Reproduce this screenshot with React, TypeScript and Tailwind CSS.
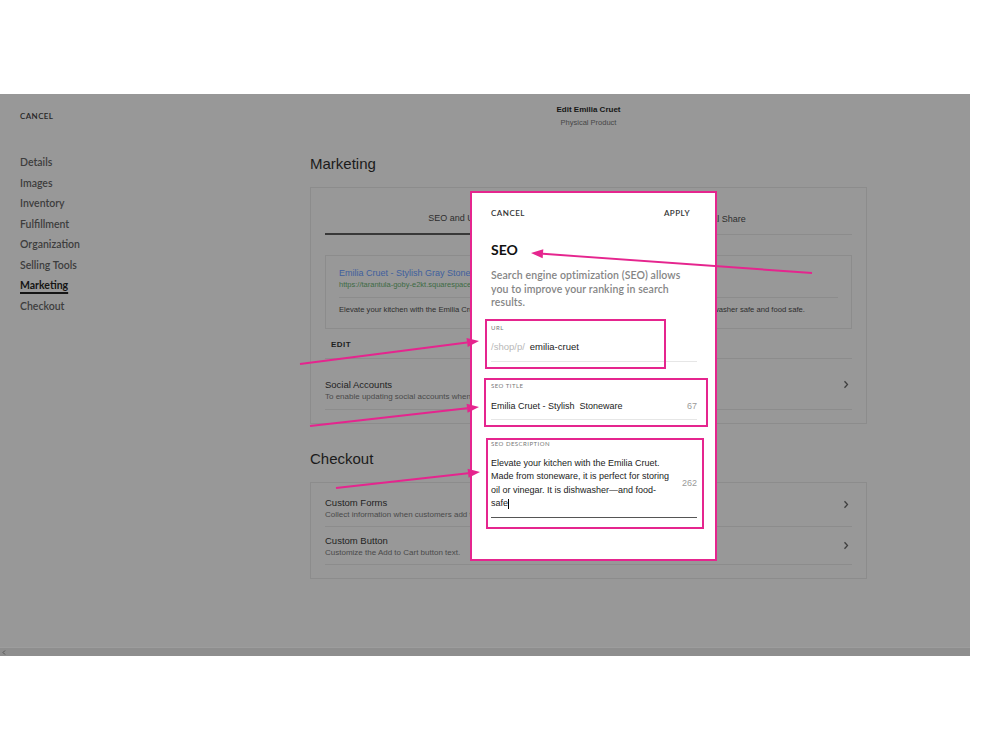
import React from 'react';

const PINK = '#e5258e';

const navItems = ['Details', 'Images', 'Inventory', 'Fulfillment', 'Organization', 'Selling Tools', 'Marketing', 'Checkout'];

function Chevron() {
    return (
        <svg width="6" height="9" viewBox="0 0 6 9" className="shrink-0">
            <path d="M1.5 1.2 4.5 4.5 1.5 7.8" stroke="#3f3f3f" strokeWidth="1.3" fill="none" />
        </svg>
    );
}

// pink annotation arrow, tip at x2/y2
function Arrow({ x1, y1, x2, y2 }: { x1: number; y1: number; x2: number; y2: number }) {
    const dx = x2 - x1;
    const dy = y2 - y1;
    const len = Math.hypot(dx, dy);
    const ux = dx / len;
    const uy = dy / len;
    const hl = 12;
    const hw = 4.5;
    const bx = x2 - ux * hl;
    const by = y2 - uy * hl;
    const pts = `${x2},${y2} ${bx - uy * hw},${by + ux * hw} ${bx + uy * hw},${by - ux * hw}`;
    return (
        <g>
            <line x1={x1} y1={y1} x2={bx} y2={by} stroke={PINK} strokeWidth="2" />
            <polygon points={pts} fill={PINK} />
        </g>
    );
}

function RowItem({ title, sub, last }: { title: string; sub: string; last?: boolean }) {
    return (
        <div className="flex items-center justify-between pr-[3px] border-b border-[#8c8c8c]">
            <div className={last ? 'pt-[7px] pb-[6px]' : 'pt-[13px] pb-[6px]'}>
                <div className="text-[9.5px] leading-[14px] text-[#1f1f1f]">{title}</div>
                <div className="text-[8px] leading-[10px] text-[#4a4a4a] whitespace-nowrap">{sub}</div>
            </div>
            <Chevron />
        </div>
    );
}

export default function App() {
    return (
        <div className="relative w-[1000px] h-[750px] bg-white overflow-hidden pt-[94px] font-['Liberation_Sans',Arial,sans-serif]">
            {/* dimmed editor screenshot */}
            <div className="relative w-[970px] h-[562px] bg-[#989898] flex flex-col">
                <div className="flex flex-1">
                    {/* sidebar */}
                    <div className="w-[310px] pl-5 pt-[17px] font-['Lato',sans-serif]">
                        <div className="text-[8px] leading-[10px] font-semibold tracking-[0.05em] text-[#262626]">CANCEL</div>
                        <div className="mt-[32px] flex flex-col">
                            {navItems.map((n) => (
                                <div key={n} className="h-[20.5px] flex items-center">
                                    <span
                                        className={
                                            n === 'Marketing'
                                                ? 'text-[10.5px] font-bold text-[#141414] underline underline-offset-[3px] decoration-[1.5px]'
                                                : 'text-[10.5px] font-semibold text-[#3d3d3d]'
                                        }
                                    >
                                        {n}
                                    </span>
                                </div>
                            ))}
                        </div>
                    </div>

                    {/* main column */}
                    <div className="w-[557px] pt-[11px]">
                        <div className="text-center">
                            <div className="text-[8px] leading-[10px] font-bold text-[#161616]">Edit Emilia Cruet</div>
                            <div className="mt-[3px] text-[7.5px] leading-[10px] text-[#474747]">Physical Product</div>
                        </div>

                        <div className="mt-[26px] text-[15px] leading-[20px] text-[#1b1b1b]">Marketing</div>

                        <div className="mt-[13px] border border-[#8c8c8c] px-[14px] pt-[14px] pb-[13px]">
                            <div className="grid grid-cols-2 h-[33px] border-b border-[#8c8c8c] text-[9px] text-[#2e2e2e]">
                                <div className="flex items-center justify-center pt-[3px] border-b-2 border-[#383838] -mb-px">SEO and URL</div>
                                <div className="flex items-center justify-center pt-[3px]">Social Share</div>
                            </div>

                            <div className="mt-[20px] h-[74px] border border-[#8c8c8c] px-[13px] pt-[11px]">
                                <div className="text-[9px] leading-[12px] text-[#40609e] whitespace-nowrap">Emilia Cruet - Stylish Gray Stoneware</div>
                                <div className="mt-px text-[7.5px] leading-[10px] text-[#3d6b44] whitespace-nowrap">https://tarantula-goby-e2kt.squarespace.com/shop/p/emilia-cruet</div>
                                <div className="mt-[7px] border-t border-[#8c8c8c]" />
                                <div className="mt-[7px] text-[7.65px] leading-[10px] text-[#2e2e2e] whitespace-nowrap">
                                    Elevate your kitchen with the Emilia Cruet. Made from stoneware, it is perfect for storing oil or vinegar. It is dishwasher safe and food safe.
                                </div>
                            </div>

                            <div className="pt-[11px] pb-[8px] pl-[6px] border-b border-[#8c8c8c] text-[8px] leading-[10px] font-bold tracking-[0.06em] text-[#1e1e1e]">EDIT</div>

                            <div className="flex items-center justify-between pr-[3px] border-b border-[#8c8c8c]">
                                <div className="pt-[19px] pb-[7px]">
                                    <div className="text-[9.5px] leading-[14px] text-[#1f1f1f]">Social Accounts</div>
                                    <div className="text-[8px] leading-[10px] text-[#4a4a4a] whitespace-nowrap">
                                        To enable updating social accounts when you publish, connect your accounts.
                                    </div>
                                </div>
                                <Chevron />
                            </div>
                        </div>

                        <div className="mt-[25px] text-[15px] leading-[20px] text-[#1b1b1b]">Checkout</div>

                        <div className="mt-[13px] border border-[#8c8c8c] px-[14px] pb-[13px]">
                            <RowItem title="Custom Forms" sub="Collect information when customers add this product to their cart." />
                            <RowItem title="Custom Button" sub="Customize the Add to Cart button text." last />
                        </div>
                    </div>
                </div>

                {/* horizontal scrollbar */}
                <div className="h-[9px] bg-[#8e8e8e] border-t border-[#9d9d9d] flex items-center pl-[2px]">
                    <svg width="4" height="5" viewBox="0 0 4 5">
                        <path d="M3 0.5 1 2.5 3 4.5" stroke="#555" strokeWidth="1" fill="none" />
                    </svg>
                </div>

                {/* SEO modal */}
                <div className="absolute left-[470px] top-[97px] w-[247px] h-[370px] bg-white border-2 border-[#e5258e] pl-[19px] pr-[18px] pt-[15px]">
                    <div className="flex justify-between pr-[7px] font-['Lato',sans-serif] text-[8px] leading-[10px] tracking-[0.06em] font-semibold text-[#333]">
                        <span>CANCEL</span>
                        <span>APPLY</span>
                    </div>
                    <div className="mt-[23px] font-['Lato',sans-serif] text-[14px] leading-[18px] font-bold text-[#111]">SEO</div>
                    <p className="mt-[10px] font-['Lato',sans-serif] text-[10.5px] leading-[13.5px] font-semibold text-[#858585] tracking-[0.01em]">
                        Search engine optimization (SEO) allows
                        <br />
                        you to improve your ranking in search
                        <br />
                        results.
                    </p>

                    <div className="mt-[14px] pb-[8px] border-b border-[#e6e6e6]">
                        <div className="font-['Lato',sans-serif] text-[6px] leading-[8px] tracking-[0.08em] text-[#777]">URL</div>
                        <div className="mt-[9px] flex text-[9.5px] leading-[12px]">
                            <span className="text-[#b8b8b8]">/shop/p/</span>
                            <span className="ml-[5px] text-[#222]">emilia-cruet</span>
                        </div>
                    </div>

                    <div className="mt-[20px] pb-[7px] border-b border-[#e6e6e6]">
                        <div className="font-['Lato',sans-serif] text-[6px] leading-[8px] tracking-[0.08em] text-[#777]">SEO TITLE</div>
                        <div className="mt-[10px] flex justify-between text-[9px] leading-[12px]">
                            <span className="text-[#222] whitespace-pre">Emilia Cruet - Stylish  Stoneware</span>
                            <span className="text-[#9a9a9a]">67</span>
                        </div>
                    </div>

                    <div className="mt-[20px] pb-[6px] border-b border-[#555]">
                        <div className="font-['Lato',sans-serif] text-[6px] leading-[8px] tracking-[0.08em] text-[#777]">SEO DESCRIPTION</div>
                        <div className="mt-[9px] flex items-center justify-between">
                            <div className="text-[9px] leading-[13.6px] text-[#222]">
                                Elevate your kitchen with the Emilia Cruet.
                                <br />
                                Made from stoneware, it is perfect for storing
                                <br />
                                oil or vinegar. It is dishwasher—and food-
                                <br />
                                safe<span className="inline-block w-px h-[10px] bg-black align-middle" />
                            </div>
                            <span className="text-[9px] text-[#9a9a9a]">262</span>
                        </div>
                    </div>
                </div>
            </div>

            {/* annotation boxes */}
            <div className="absolute left-[485px] top-[319px] w-[181px] h-[50px] border-2 border-[#e5258e]" />
            <div className="absolute left-[484px] top-[378px] w-[224px] h-[49px] border-2 border-[#e5258e]" />
            <div className="absolute left-[486px] top-[438px] w-[218px] h-[91px] border-2 border-[#e5258e]" />

            {/* annotation arrows */}
            <svg className="absolute inset-0 pointer-events-none" width="1000" height="750">
                <Arrow x1={812} y1={273} x2={531} y2={253} />
                <Arrow x1={300} y1={364} x2={479} y2={341} />
                <Arrow x1={310} y1={426} x2={479} y2={407} />
                <Arrow x1={336} y1={488} x2={480} y2={472} />
            </svg>
        </div>
    );
}
